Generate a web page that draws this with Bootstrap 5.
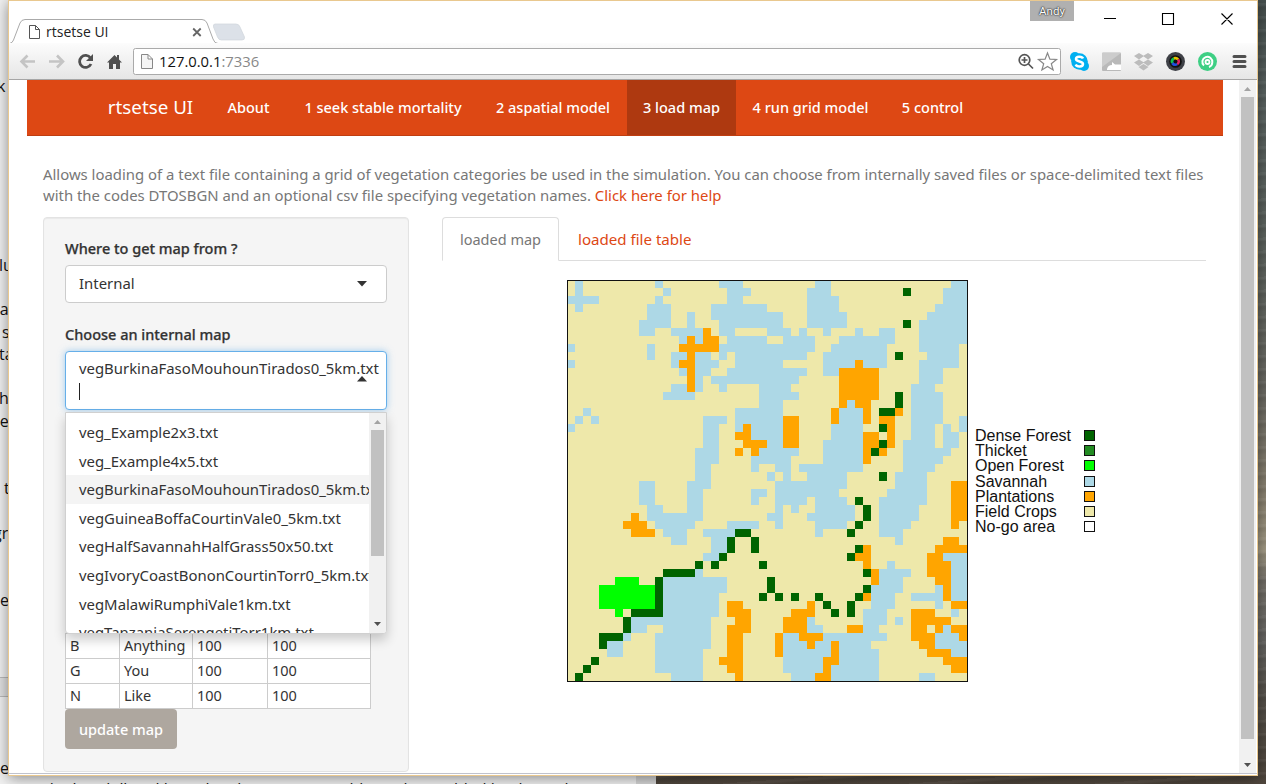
<!DOCTYPE html>
<html lang="en">
<head>
<meta charset="utf-8">
<title>rtsetse UI</title>
<link href="https://cdn.jsdelivr.net/npm/bootstrap@5.3.0/dist/css/bootstrap.min.css" rel="stylesheet">
<style>
body{margin:0;background:#544c41;font-family:"Noto Sans",sans-serif;overflow:hidden}
.desktop{width:1266px;height:784px;position:relative;overflow:hidden;background:
 repeating-linear-gradient(176deg,rgba(255,255,255,.05) 0 2px,rgba(0,0,0,.06) 4px 6px,transparent 9px 13px),
 linear-gradient(#46504e 0,#596260 90px,#5e645f 250px,#6b6a63 390px,#8a8271 490px,#a29a84 550px,#77736b 580px,#686764 640px,#56514a 700px,#50473d 784px)}
.docwin{position:absolute;left:0;top:0;width:656px;height:784px;background:#f2f2f2;font:16px/22px "Open Sans",sans-serif;color:#111;border-right:20px solid #d6d6d6}
.docwin span{position:absolute;white-space:pre}
.band{position:absolute;left:0;top:677px;width:9px;height:20px;background:#e2e2e2;border:solid #bbb;border-width:1px 0}
.chromewin{position:absolute;left:8px;top:0;width:1250px;height:776px;background:#fff;border:1px solid #e9c88f;box-shadow:0 2px 14px rgba(0,0,0,.45)}
.titlebar{height:42px;position:relative;flex:none}
.titlebar>svg{position:absolute;left:0;top:0}
.tabname{position:absolute;left:37px;top:20px;font:14px/21px "Open Sans",sans-serif;color:#222}
.user{position:absolute;left:1021px;top:0;width:44px;height:20px;background:#b0b0b0;color:#fff;font:11.5px/21px Roboto,sans-serif;text-shadow:0 0 2px #000,0 0 1px #333}
.toolbar{height:37px;background:linear-gradient(#fcfcfc,#e6e6e6);border-bottom:1px solid #a6a6a6;position:relative;flex:none}
.toolbar>svg{position:absolute;left:0;top:-43px}
.urltext{position:absolute;left:150px;top:8px;font:14.8px/21px "Open Sans",sans-serif;color:#111}
.urltext span{color:#888}
.viewport{height:694px;overflow:hidden;border-bottom:1px solid #c0c2cc}
.page{width:1230px;padding-left:18px}
.topnav{width:1196px;height:56px;background:#dd4814;border-bottom:1px solid #bf3e11;padding:0 0 0 64px}
.topnav a.nav-link{color:#fff;font-size:14.5px;font-weight:500;line-height:54px;padding:0;text-align:center;white-space:nowrap}
.topnav a.on{background:#ae3910;height:55px}
.topnav a.brand{font-size:18.8px;font-weight:400}
.intro{padding:28px 0 0 16px;width:1190px;font-size:14.9px;line-height:21px;color:#777;margin-bottom:11px;white-space:nowrap}
.intro a:not([href]),.tabsbar a:not([href]){color:#dd4814;text-decoration:none}
.sidewell{width:366px;height:555px;margin-left:16px;background:#f5f5f5;border:1px solid #e3e3e3;border-radius:4px;padding:20px 21px;box-shadow:inset 0 1px 1px rgba(0,0,0,.05);color:#333;font-size:14.5px;line-height:21px}
.sidewell label{display:block;font-weight:500;-webkit-text-stroke:.25px #333;margin-bottom:6px;height:21px}
.picker{background:#fff;border:1px solid #ccc;border-radius:4px;height:38px;width:322px;padding:7px 13px;position:relative;font-size:14.9px}
.picker svg{position:absolute;right:19px}
.picker.open{height:59px;border-color:#66afe9;box-shadow:0 0 7px rgba(102,175,233,.6);padding-top:6px}
.cursor{width:1px;height:17px;background:#222;margin-top:4px}
.options{position:absolute;left:-1px;top:60px;width:322px;height:222px;background:#fff;border:1px solid #d0d0d0;border-radius:0 0 4px 4px;box-shadow:0 6px 12px rgba(0,0,0,.2);overflow:hidden;z-index:5}
.options .opt{height:28.6px;line-height:28.6px;padding-left:13px;white-space:nowrap;overflow:hidden;width:304px}
.options .first{margin-top:5px}
.options .sel{background:#f4f4f4}
.vegtable{width:306px;margin-top:223px;background:#fff;border-collapse:collapse;table-layout:fixed}
.vegtable td{border:1px solid #ccc;height:25px;padding:0 4px 2px;line-height:20px}
.btn.upd{background:#aea79f;color:#fff;border-radius:4px;border:0;width:112px;height:40px;font-size:14.5px;font-weight:500;padding:1px 0 0}
.mainpane{width:764px;margin-left:33px}
.tabsbar{height:44px;border-bottom:1px solid #ddd;font-size:14.5px;line-height:43px;color:#777}
.tabsbar .cur{width:117px;height:44px;border:1px solid #ddd;border-bottom-color:#fff;border-radius:4px 4px 0 0;text-align:center}
.tabsbar a{margin-left:19px;font-size:15.1px;padding-top:1px}
.vegmap{margin:19px 0 0 124px}
.legendbox{margin:167px 0 0 7px;font:16px/15.2px "Liberation Sans",sans-serif;color:#111;width:120px}
.legendbox i{width:11px;height:11px;border:1px solid #111}
.legendbox div{height:15.2px}
</style>
</head>
<body>
<div class="desktop">
 <div class="docwin">
  <span style="left:-3px;top:75px">k</span><span style="left:-1px;top:254px">lu</span><span style="left:-10px;top:298px">na</span><span style="left:2px;top:321px">s</span><span style="left:-1px;top:343px">ta</span><span style="left:-1px;top:387px">h</span><span style="left:-10px;top:410px">ne</span><span style="left:4px;top:477px">t</span><span style="left:-7px;top:522px">gr</span><span style="left:0;top:589px">e</span><span style="left:0;top:757px">e</span>
  <div class="band"></div>
  <span style="left:44px;top:778px">the 'model' and how the above tests would now be enabled by the code</span>
 </div>
 <div class="chromewin d-flex flex-column">
  <div class="titlebar">
   <svg width="1248" height="43" viewBox="9 1 1248 43" fill="none">
    <path d="M9 43.500H9.500Q12.500 43 13.500 40L20 23Q21.500 19.500 25 19.500H202Q205.500 19.500 207 23L213 39Q214.500 43.500 218 43.500H1257" fill="#fff" stroke="#aaa"/>
    <path d="M215 24H236Q239 24 240 27L244.500 37Q245 40 242 40H221.500Q218.500 40 217.500 37L213.500 27Q213 24 215 24Z" fill="#dce1e8" stroke="#d0d5db" stroke-width=".7"/>
    <path d="M29.500 25.500H35.500L39.500 29.500V38.500H29.500ZM35.500 25.500V29.500H39.500" stroke="#555"/>
    <path d="M193.200 28.500l7.500 7.500M200.700 28.500l-7.500 7.500" stroke="#666" stroke-width="1.800"/>
    <path d="M1104 18.500h12M1162.500 13.500h11v11h-11zM1221.500 13.500l11 11M1232.500 13.500l-11 11" stroke="#000" stroke-width="1.100"/>
   </svg>
   <div class="tabname">rtsetse UI</div>
   <div class="user text-center">Andy</div>
  </div>
  <div class="toolbar">
   <svg width="1248" height="79" viewBox="9 0 1248 79" fill="none">
    <rect x="133.500" y="48.500" width="927" height="26" rx="2" fill="#fff" stroke="#aaa"/>
    <path d="M35 61.500H22M27.500 55.500L21.500 61.500l6 6M49 61.500H62M57 55.500L63 61.500l-6 6" stroke="#c4c4c4" stroke-width="2.600"/>
    <path d="M90.500 58A6 6 0 1 0 91 64" stroke="#505050" stroke-width="2.800"/><path d="M93 54v7h-7z" fill="#505050"/>
    <path d="M107 62.500L114.500 55l2.500 2.500V55h2v4.500l3 3h-2V69h-4v-5h-3v5h-4v-6.500z" fill="#505050"/>
    <path d="M141.500 54.500H148L152.500 59V68.500H141.500ZM148 54.500V59H152.500" fill="#f5f5f5" stroke="#888"/>
    <circle cx="1024.500" cy="60" r="5.300" stroke="#555" stroke-width="1.700"/><path d="M1028.500 64l4.500 4.500M1021.500 60h6M1024.500 57v6" stroke="#555" stroke-width="1.700"/>
    <path d="M1047.500 53l2.400 6.200 6.600.3-5.200 4.200 1.800 6.300-5.600-3.600-5.600 3.600 1.800-6.300-5.200-4.200 6.600-.3z" stroke="#888" stroke-width="1.200"/>
    <g fill="#00aff0"><circle cx="1079.500" cy="61.500" r="8.300"/><circle cx="1075" cy="57" r="5"/><circle cx="1084" cy="66" r="5"/></g>
    <path d="M1083 58.500C1082 56 1076 56 1076 59s7 2 7 5-6 3.500-7.300.5" stroke="#fff" stroke-width="2.500"/>
    <rect x="1102" y="52.500" width="19" height="18.500" rx="1" fill="#b9b9b9"/><path d="M1102 53h19L1102 67z" fill="#ccc"/><path d="M1107 69q1-4 5-4v-3l3 2.500h6V70h-14z" fill="#fff"/>
    <g fill="#bcbcbc"><path d="M1139 53l5 3-5 3.500-5-3.500zM1148 53l5 3-5 3.500-5-3.500zM1139 59.500l5 3-5 3.500-5-3.500zM1148 59.500l5 3-5 3.500-5-3.500zM1143.500 64l5 3-5 3.500-5-3.500z"/></g>
    <circle cx="1175.500" cy="61.500" r="9.500" fill="#3e4046"/><circle cx="1175.500" cy="61.500" r="6.300" fill="#111"/>
    <g stroke-width="3"><path d="M1172.500 63A3.500 3.500 0 0 1 1174 58.500" stroke="#10c050"/><path d="M1174 58.500A3.500 3.500 0 0 1 1178 59.500" stroke="#e8c000"/><path d="M1178 59.500A3.500 3.500 0 0 1 1177 64" stroke="#e02060"/><path d="M1177 64A3.500 3.500 0 0 1 1172.500 63" stroke="#2050e0"/></g><circle cx="1175.500" cy="61.500" r="2" fill="#111"/>
    <circle cx="1207.500" cy="61.500" r="9.500" fill="#3ecf84"/><path d="M1204 65.500A5 5 0 1 1 1212.300 62.500Q1212 66 1209 67" stroke="#fff" stroke-width="2"/><circle cx="1207.500" cy="62" r="2" stroke="#fff" stroke-width="1.800"/>
    <path d="M1234 56.500h11M1234 61.500h11M1234 66.500h11" stroke="#505050" stroke-width="3" stroke-linecap="round"/>
   </svg>
   <div class="urltext">127.0.0.1<span>:7336</span></div>
  </div>
  <div class="viewport d-flex">
   <div class="page">
    <nav class="topnav navbar navbar-expand flex-nowrap align-items-start">
     <a class="nav-link brand" style="width:119px">rtsetse UI</a>
     <a class="nav-link" style="width:77px">About</a>
     <a class="nav-link" style="width:192px">1 seek stable mortality</a>
     <a class="nav-link" style="width:148px">2 aspatial model</a>
     <a class="nav-link on" style="width:109px">3 load map</a>
     <a class="nav-link" style="width:149px">4 run grid model</a>
     <a class="nav-link" style="width:95px">5 control</a>
    </nav>
    <p class="intro">Allows loading of a text file containing a grid of vegetation categories be used in the simulation. You can choose from internally saved files or space-delimited text files<br>with the codes DTOSBGN and an optional csv file specifying vegetation names. <a>Click here for help</a></p>
    <div class="d-flex">
     <aside class="sidewell">
      <label>Where to get map from ?</label>
      <div class="picker">Internal<svg style="top:15px" width="10" height="6"><path d="M0 0h10L5 5.500z" fill="#333"/></svg></div>
      <label style="margin-top:21px">Choose an internal map</label>
      <div class="picker open">vegBurkinaFasoMouhounTirados0_5km.txt<div class="cursor"></div>
       <svg style="top:24px" width="10" height="6"><path d="M0 5.500h10L5 0z" fill="#333"/></svg>
       <div class="options">
        <div class="opt first">veg_Example2x3.txt</div><div class="opt">veg_Example4x5.txt</div><div class="opt sel">vegBurkinaFasoMouhounTirados0_5km.txt</div><div class="opt">vegGuineaBoffaCourtinVale0_5km.txt</div><div class="opt">vegHalfSavannahHalfGrass50x50.txt</div><div class="opt">vegIvoryCoastBononCourtinTorr0_5km.txt</div><div class="opt">vegMalawiRumphiVale1km.txt</div><div class="opt">vegTanzaniaSerengetiTorr1km.txt</div>
        <svg style="right:0;top:0" width="17" height="220"><path d="M0 0h17v220H0z" fill="#f1f1f1"/><path d="M2 17h13v126H2z" fill="#c1c1c1"/><path d="M5 11h7L8.500 7z" fill="#a3a3a3"/><path d="M5 209h7l-3.500 4z" fill="#505050"/></svg>
       </div>
      </div>
      <table class="vegtable"><colgroup><col style="width:54px"><col style="width:73px"><col style="width:75px"><col></colgroup>
       <tr><td>B</td><td>Anything</td><td>100</td><td>100</td></tr><tr><td>G</td><td>You</td><td>100</td><td>100</td></tr><tr><td>N</td><td>Like</td><td>100</td><td>100</td></tr></table>
      <button class="btn upd">update map</button>
     </aside>
     <main class="mainpane">
      <div class="tabsbar d-flex"><div class="cur">loaded map</div><a>loaded file table</a></div>
      <div class="d-flex">
       <svg class="vegmap" id="map" width="402" height="402" viewBox="-1 0 402 402" shape-rendering="crispEdges"></svg>
       <div class="legendbox" id="legend"></div>
      </div>
     </main>
    </div>
   </div>
   <svg width="17" height="694"><path d="M0 0h17v694H0z" fill="#f1f1f1"/><path d="M2 17h13v642H2z" fill="#c1c1c1"/><path d="M5 11h7L8.500 7z" fill="#a3a3a3"/><path d="M5 683h7l-3.500 4z" fill="#505050"/></svg>
  </div>
 </div>
</div>
<script>
const colours={D:'#006400',S:'#add8e6',P:'#ffa500',O:'#00ff00',F:'#eee8aa'};
// One line per grid row: vegetation code, first column, last column; the rest is field crops.
const grid=`S1 S11 S19-21 S31-32 S48-49
S1 S12 S20-22 S30-32 D42 S47-49
S0-3 S11 S20-21 S30-33 S47-49
S1 S10-12 S18-24 S30-33 S46-49
S10-12 S15 S18-26 S30-34 S45-49
S9-12 S15 S19-26 S30-34 D42 S44-49
S9-10 S13-16 P17 S19-20 S25-27 S29 S32 S36 S39-40 S44-49
S14 P15 S16 P17-18 S20-24 S27-30 S34-40 S44-49
S0 S10 P14-18 S19-30 S33-39 S44-48
S10 S13-14 P15 S16-17 S19 S21-29 S32-39 D41 S45-48
S0 S13 P14-15 S16-18 S21-26 S32-35 P36 S37-39 S44-48
S14 P15 S16-17 S20-29 S32-33 P34-38 S44-46
P15 S16 S18-28 P34-38 S44-46
S13-14 P15 S16 S19 S24-27 P34-38 S43-45
S12-15 S24-28 P34-38 D41 S43-46
S24-26 P34 S35 P36-37 D41 S43-46
S2 S21-26 P33 S34-36 P37 D39-40 P41 S43-46
S1 S3 S17-19 S21-26 P27-28 P33 S34-36 P37 P39-40 S43-46 S49
S0 S17-18 S21 P22 S23-26 P27-28 S33-36 D39 P40 S43-45 S47 S49
S17-18 P21-22 S23-26 P27-28 S33-36 P37-38 P40 S43-45 S47-48
S17-18 P22-24 S25-26 P27-28 S32-36 P37-38 D39 P40 S42-45 S47-48
S16-18 P21 P23 S24-28 S32-36 P37 D38 P39 S42-47
S16-18 S23-27 S32-36 P37 S42-46
S16-17 S23 S26-27 S29-36 S42-45
S16-17 S25 S27 S30-34 D39 S41-44
S9-10 S15-17 S26-34 S41-44 P48-49
S9-10 S15-16 S23-24 S26-33 S40-44 P48-49
S9-10 S15-16 S23 S26-29 S31-34 D36 S39-44 P48-49
S10-11 S15-16 S26 S28 S31-35 D37 S39-43 P48-49
P8 S10-16 S25-26 S30-35 D37 S39-43 P48-49
P7-9 S11-15 S20-23 S26 S31-34 D36 S39-42 P48
P8-10 S12-14 S17-20 D21-22 S31 D35 S39-41
S13-14 S18-19 D20 D23 S41 P47-48
S18-19 D20 D23 D36 P37 P46-49
S17-18 D19 D35 P36-37 P45-46 S47-49
D16 D18 D24 P37 S40 P45-47 S48-49
D12-15 S16 D37 P38 S39-42 P45-47 S48-49
O6-8 D11 S12-19 D25 P38 S39-41 P46-47 S48-49
O4-10 D11 S12-19 D25 D37 S38-41 S46 P47 S48-49
O4-10 D11 S12-18 D24 D26 D28 D31 D36 P37 S38-40 S43-46 P47 S48-49
O4-10 D11 S12-18 P20-21 P30 D32 D35 S38-40 S46 P48-49
O6 D8-11 S12-18 P20-22 P28-30 D33 D35 S37-39 P43-45 S48
D7 S8-17 P21-22 P27-29 S30 S37-39 S41 P43-47
D7 S8-9 S12-17 P20-22 P27-29 S30-31 P35-36 S37-38 P43-44 P46 S47 P48-49
D4-6 S7 S11-17 P20-21 P26 S27-28 P29-31 S32-39 P43-45 S46-48 P49
D4 S5-6 S11-17 P20-21 P26 S27-29 P30 S31-32 P33 S34-37 P44-45 S46-49
S5-6 S11-16 P20-21 P26 S27-32 P33 S34-38 P45-47 S48-49
D3 S11-16 P19-21 S27-31 P32-33 S34-38 P47-49
D2 S11-16 P20-21 S27-31 P32 S33-38 P48-49
D1 S13-16 P21 S28-30 P31-32 S33-38 S44-45`.split('\n');
let out='<rect width="400" height="401" fill="'+colours.F+'"/>';
grid.forEach((line,r)=>{
 const y=8*r+(r>=25?1:0),h=r===24?9:8;
 line.split(' ').forEach(run=>{
  const [a,b]=run.slice(1).split('-').map(Number),last=b===undefined?a:b;
  out+=`<rect x="${a*8}" y="${y}" width="${(last-a+1)*8}" height="${h}" fill="${colours[run[0]]}"/>`;
 });
});
out+='<path d="M.5 .5H400.500V401.500H.5Z" fill="none" stroke="#111"/>';
document.getElementById('map').innerHTML=out;
document.getElementById('legend').innerHTML=[['Dense Forest','#006400'],['Thicket','#228b22'],['Open Forest','#00ff00'],['Savannah','#add8e6'],['Plantations','#ffa500'],['Field Crops','#eee8aa'],['No-go area','#fff']]
 .map(([n,c])=>`<div class="d-flex justify-content-between align-items-center"><span>${n}</span><i style="background:${c}"></i></div>`).join('');
</script>
</body>
</html>
